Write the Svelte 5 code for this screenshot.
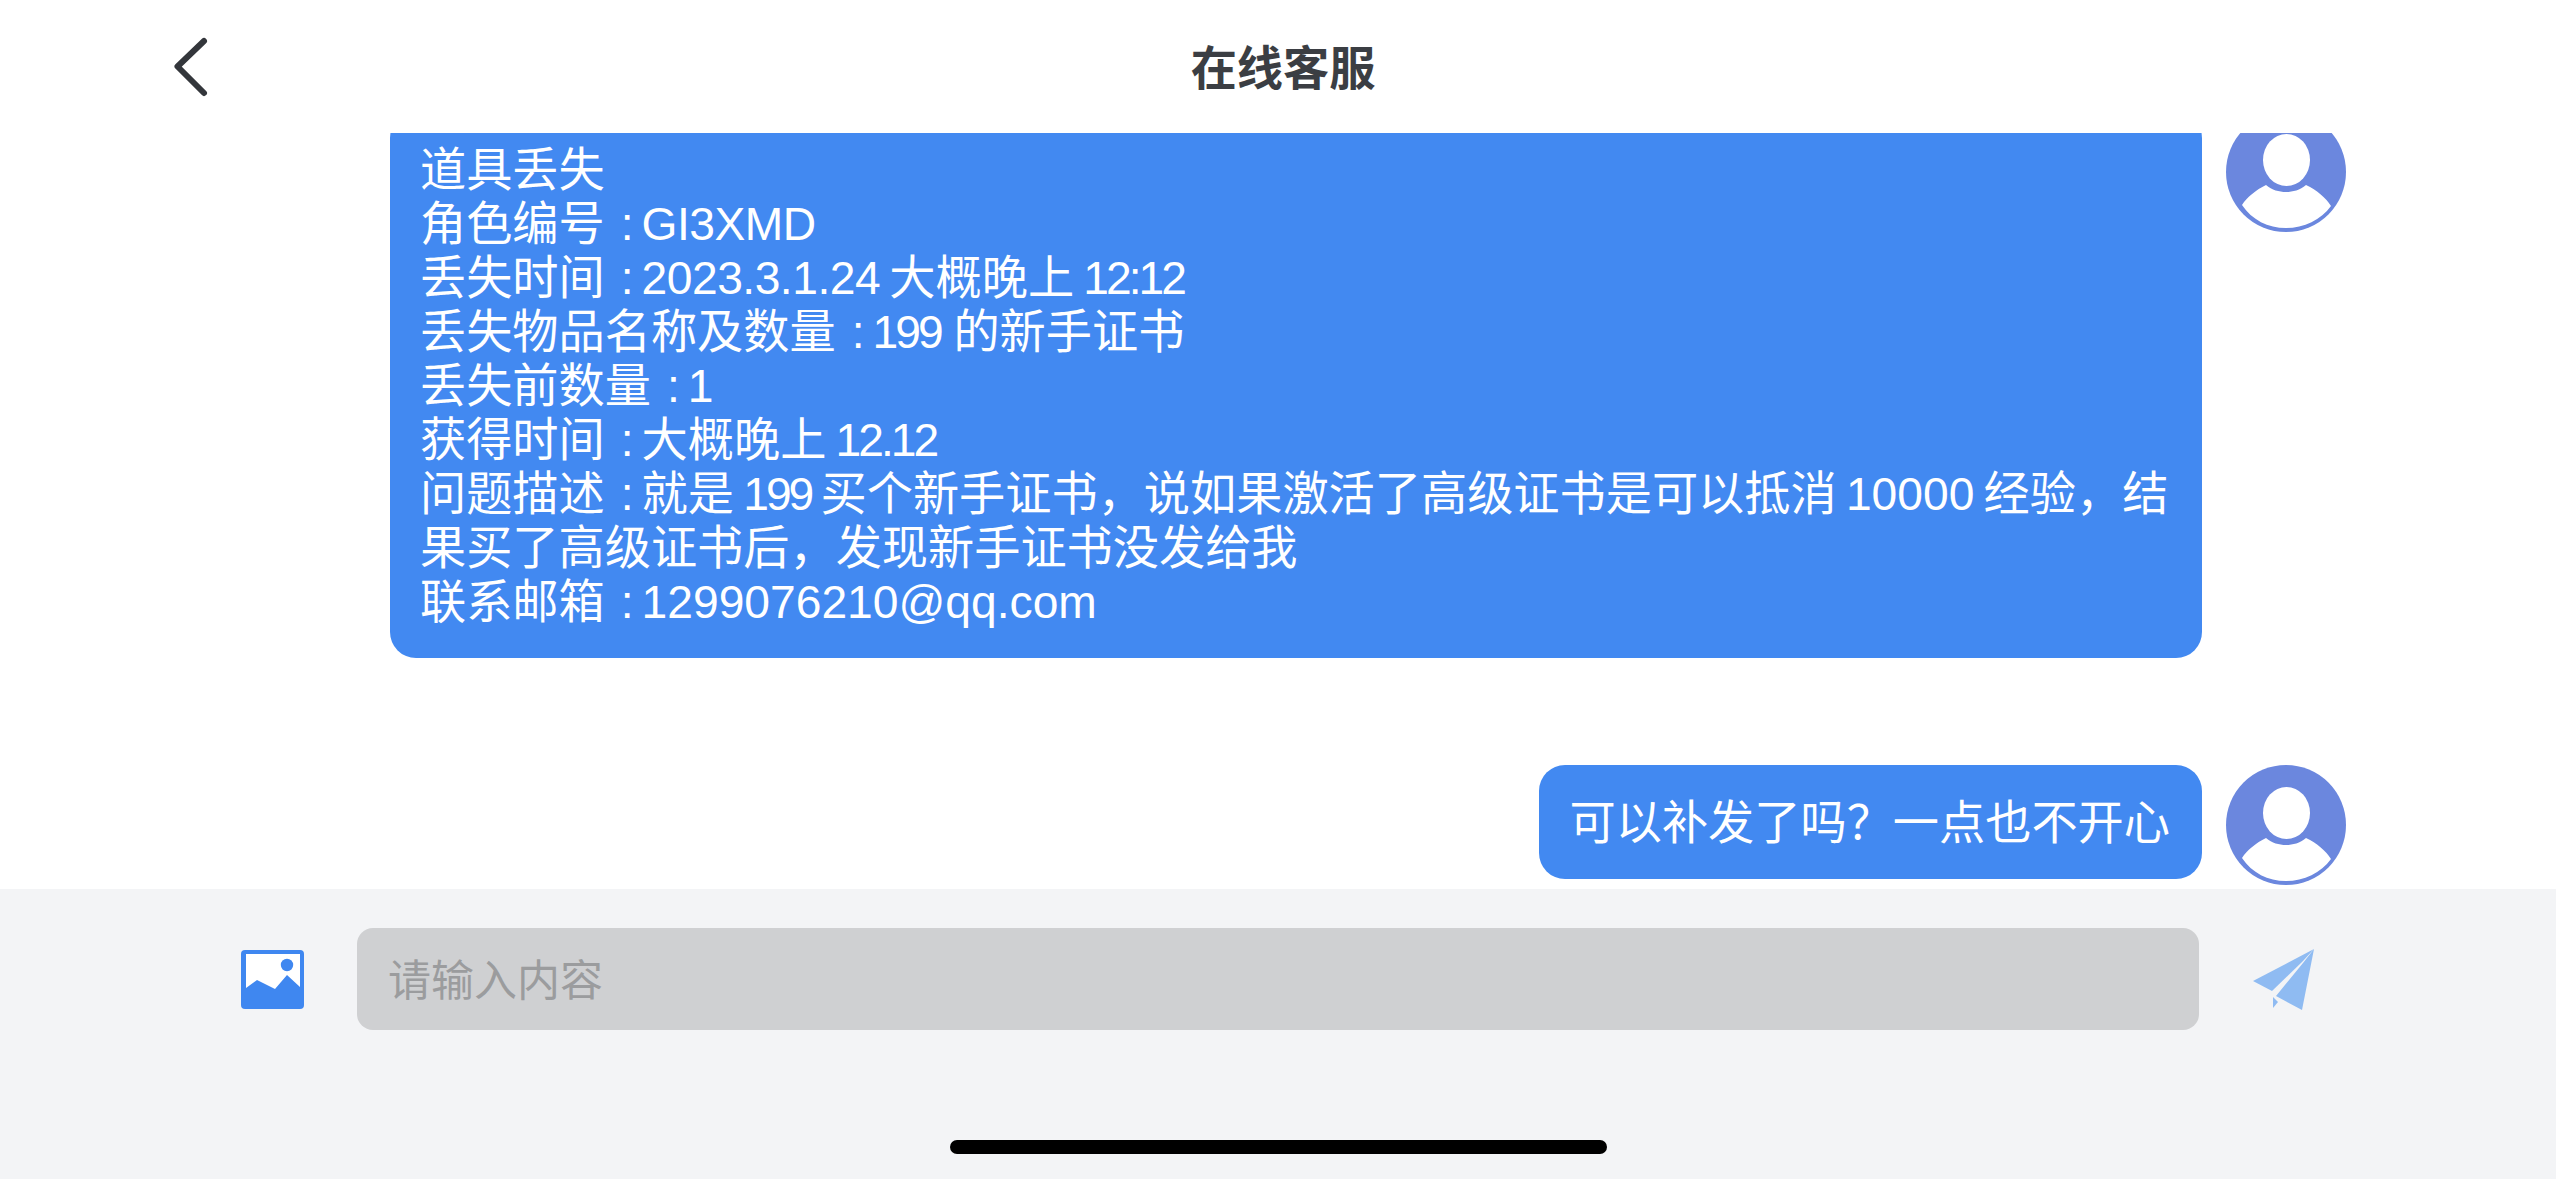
<script>
	// spacing between latin and CJK runs is narrower than a normal space
	const gap = '\u2009';
</script>

{#snippet avatar()}
	<svg class="avatar" viewBox="0 0 120 120">
		<circle cx="60" cy="60" r="60" fill="#6b87de" />
		<ellipse cx="60.5" cy="48" rx="23.5" ry="26" fill="#fff" />
		<path
			d="M16 93C21 85 30 78 40 73C46 78 53 80 60 80C67 80 74 78 80 73C91 78 100 86 105 94C95 108 78 116 60 116C42 116 26 108 16 93Z"
			fill="#fff"
		/>
	</svg>
{/snippet}

{#snippet colon()}<span class="colon">:</span>{/snippet}

<div class="page">
	<header class="header">
		<svg class="back" viewBox="0 0 40 64">
			<path d="M33 6L6.5 31.5L33 58" fill="none" stroke="#33363b" stroke-width="6" stroke-linecap="round" stroke-linejoin="round" />
		</svg>
		<h1 class="title">在线客服</h1>
	</header>

	<main class="messages">
		<div class="row first">
			<div class="bubble">
				<div>道具丢失</div>
				<div>角色编号{@render colon()}<span class="narrow">GI3XMD</span></div>
				<div>丢失时间{@render colon()}<span class="narrow">2023.3.1.24</span>{gap}大概晚上{gap}<span class="tight">12:12</span></div>
				<div>丢失物品名称及数量{@render colon()}<span class="tight">199</span> 的新手证书</div>
				<div>丢失前数量{@render colon()}1</div>
				<div>获得时间{@render colon()}大概晚上{gap}<span class="tight">12.12</span></div>
				<div>问题描述{@render colon()}就是{gap}<span class="tight">199</span>{gap}买个新手证书，说如果激活了高级证书是可以抵消{gap}10000{gap}经验，结</div>
				<div>果买了高级证书后，发现新手证书没发给我</div>
				<div>联系邮箱{@render colon()}1299076210@qq.com</div>
			</div>
			{@render avatar()}
		</div>
		<div class="row">
			<div class="bubble">可以补发了吗？一点也不开心</div>
			{@render avatar()}
		</div>
	</main>

	<footer class="footer">
		<div class="composer">
			<svg class="pic" viewBox="0 0 63 59">
				<rect width="63" height="59" rx="4" fill="#3f87f0" />
				<path d="M5 4H59V37L46 25L34 39L16 30L5 38Z" fill="#fff" />
				<circle cx="46" cy="15" r="6.2" fill="#3f87f0" />
			</svg>
			<div class="input">请输入内容</div>
			<svg class="send" viewBox="0 0 62 63">
				<path d="M61 1L50 13L19 43L0 33Z" fill="#8fbbf2" />
				<path d="M61 1L50 15L23 48L49 62Z" fill="#8fbbf2" />
				<path d="M20 49L25 54L20 60Z" fill="#8fbbf2" />
			</svg>
		</div>
		<div class="home-bar"></div>
	</footer>
</div>

<style>
	:global(body) {
		background: #fff;
	}

	.page {
		display: flex;
		flex-direction: column;
		height: 1179px;
		overflow: hidden;
		font-family: 'Liberation Sans', 'Noto Sans CJK SC', sans-serif;
		font-size: 46.2px;
		background: #fff;
	}

	.header {
		position: relative;
		flex: none;
		display: flex;
		justify-content: center;
		align-items: center;
		box-sizing: border-box;
		height: 133px;
		padding: 0 0 4px 10px;
		background: #fff;
		z-index: 1;
	}

	.back {
		position: absolute;
		left: 171px;
		top: 35px;
		width: 40px;
		height: 64px;
	}

	.title {
		margin: 0;
		font-size: 46.2px;
		font-weight: 700;
		color: #3b3e43;
	}

	.messages {
		flex: 1;
		min-height: 0;
		display: flex;
		flex-direction: column;
		justify-content: flex-end;
		padding: 0 210px 4px 0;
	}

	.row {
		flex: none;
		display: flex;
		justify-content: flex-end;
		align-items: flex-start;
		gap: 24px;
	}

	.first {
		margin-bottom: 107px;
		height: 546px;
	}

	.bubble {
		box-sizing: border-box;
		max-width: 1812px;
		padding: 31px 32px 29px 31px;
		line-height: 54px;
		white-space: nowrap;
		color: #fff;
		background: #4289f1;
		border-radius: 26px;
	}

	.first .bubble {
		width: 1812px;
		padding-left: 30px;
	}

	.colon {
		margin: 0 8px 0 16px;
	}

	.narrow {
		letter-spacing: -0.5px;
	}

	.tight {
		letter-spacing: -3px;
	}

	.avatar {
		flex: none;
		width: 120px;
		height: 120px;
	}

	.footer {
		flex: none;
		display: flex;
		flex-direction: column;
		height: 290px;
		background: #f3f4f6;
	}

	.composer {
		display: flex;
		align-items: center;
		padding: 39px 241px 0;
	}

	.pic {
		flex: none;
		width: 63px;
		height: 59px;
	}

	.input {
		flex: 1;
		height: 102px;
		margin: 0 54px 0 53px;
		padding-left: 31px;
		font-size: 43px;
		line-height: 106px;
		color: #9b9c9e;
		background: #cfd0d2;
		border-radius: 16px;
	}

	.send {
		flex: none;
		width: 62px;
		height: 63px;
	}

	.home-bar {
		width: 657px;
		height: 14px;
		margin: auto auto 25px;
		background: #000;
		border-radius: 7px;
	}
</style>
